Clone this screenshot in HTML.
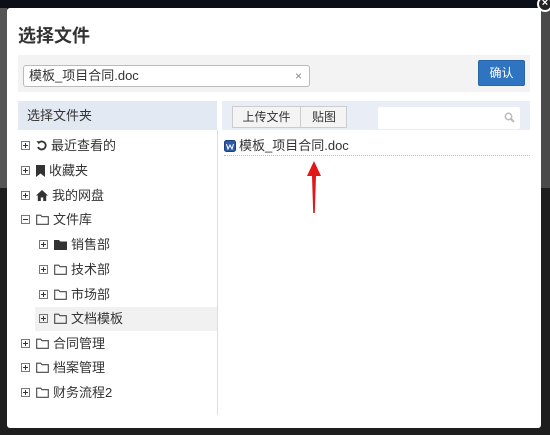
<!DOCTYPE html>
<html><head><meta charset="utf-8"><style>
*{margin:0;padding:0;box-sizing:border-box}
body{width:550px;height:435px;background:#1e1e1e;position:relative;overflow:hidden;font-family:"Liberation Sans","Noto Sans CJK SC",sans-serif;color:#333}
.abs{position:absolute}
.dlg{left:7px;top:8px;width:534px;height:420px;background:#fff;border-radius:3px}
.row{position:absolute;height:24px;line-height:24px;font-size:13px;color:#333;white-space:nowrap}
.pm{display:inline-block;width:9px;height:9px;border:1px solid #777;position:relative;vertical-align:middle;margin-right:6px;top:-1px}
.pm:before{content:"";position:absolute;left:1px;top:3px;width:5px;height:1px;background:#333}
.pm.p:after{content:"";position:absolute;left:3px;top:1px;width:1px;height:5px;background:#333}
.ic{display:inline-block;vertical-align:middle;margin-right:4px;position:relative;top:-1px}
</style></head><body>
<div class="abs" style="left:0;top:0;width:550px;height:8px;background:#0b1018"></div>
<div class="abs" style="left:0;top:8px;width:7px;height:180px;background:#555"></div>
<div class="abs" style="left:541px;top:8px;width:9px;height:180px;background:#4a4a4a"></div>
<div class="abs dlg"></div>
<div class="abs" style="left:537px;top:-4px;width:16px;height:16px;border-radius:50%;background:#222;border:2px solid #fff;color:#fff;font-size:11px;font-weight:bold;line-height:11px;text-align:center">×</div>
<div class="abs" style="left:18px;top:22px;font-size:18px;font-weight:bold;color:#333">选择文件</div>
<div class="abs" style="left:18px;top:55px;width:512px;height:37px;background:#f3f3f3"></div>
<div class="abs" style="left:23px;top:65px;width:287px;height:22px;background:#fff;border:1px solid #bbb;border-radius:3px;font-size:13px;line-height:20px;padding-left:5px">模板_项目合同.doc<span style="position:absolute;right:7px;color:#888;font-size:12px">×</span></div>
<div class="abs" style="left:478px;top:60px;width:47px;height:26px;background:#2f74c0;border:1px solid #2a64a8;border-radius:2px;color:#fff;font-size:12px;line-height:24px;text-align:center">确认</div>
<div class="abs" style="left:18px;top:101px;width:199px;height:29px;background:#e3e9f3;font-size:13px;line-height:29px;padding-left:9px">选择文件夹</div>
<div class="abs" style="left:222px;top:101px;width:308px;height:29px;background:#e9eef6"></div>
<div class="abs" style="left:232px;top:106px;width:115px;height:22px;background:#f4f4f4;border:1px solid #ccc;font-size:12px;line-height:20px"><span style="position:absolute;left:0;width:68px;text-align:center;border-right:1px solid #ccc">上传文件</span><span style="position:absolute;left:68px;width:46px;text-align:center">贴图</span></div>
<div class="abs" style="left:378px;top:107px;width:142px;height:22px;background:#fff;border-radius:2px"><svg style="position:absolute;right:5px;top:5px" width="11" height="11" viewBox="0 0 11 11"><circle cx="4.5" cy="4.5" r="3.2" fill="none" stroke="#bbb" stroke-width="1.5"/><path d="M7 7l3 3" stroke="#bbb" stroke-width="2"/></svg></div>
<div class="abs" style="left:217px;top:130px;width:1px;height:285px;background:#ddd"></div>
<div class="abs" style="left:35px;top:307px;width:182px;height:24px;background:#f1f1f1"></div>

<div class="row" style="left:21px;top:134px"><span class="pm p"></span><svg class="ic" width="11" height="11" viewBox="0 0 11 11"><path d="M3 2.5A4 4 0 1 1 2 7" fill="none" stroke="#333" stroke-width="1.8"/><path d="M0.5 1l3.5 0.5-1 3z" fill="#333"/></svg>最近查看的</div>
<div class="row" style="left:21px;top:159px"><span class="pm p"></span><svg class="ic" width="9" height="12" viewBox="0 0 9 12"><path d="M0 0h9v12l-4.5-3.5L0 12z" fill="#333"/></svg>收藏夹</div>
<div class="row" style="left:21px;top:184px"><span class="pm p"></span><svg class="ic" width="12" height="11" viewBox="0 0 12 11"><path d="M6 0L0 5.5h1.8V11h3V7.5h2.4V11h3V5.5H12z" fill="#333"/></svg>我的网盘</div>
<div class="row" style="left:21px;top:208px"><span class="pm"></span><svg class="ic" width="13" height="11" viewBox="0 0 13 11"><path d="M0.7 1.2h4l1.3 1.5h6.3v7.6H0.7z" fill="none" stroke="#444" stroke-width="1.1"/></svg>文件库</div>
<div class="row" style="left:39px;top:233px"><span class="pm p"></span><svg class="ic" width="13" height="11" viewBox="0 0 13 11"><path d="M0 1h5l1.3 1.5H13V11H0z" fill="#333"/></svg>销售部</div>
<div class="row" style="left:39px;top:258px"><span class="pm p"></span><svg class="ic" width="13" height="11" viewBox="0 0 13 11"><path d="M0.7 1.2h4l1.3 1.5h6.3v7.6H0.7z" fill="none" stroke="#444" stroke-width="1.1"/></svg>技术部</div>
<div class="row" style="left:39px;top:283px"><span class="pm p"></span><svg class="ic" width="13" height="11" viewBox="0 0 13 11"><path d="M0.7 1.2h4l1.3 1.5h6.3v7.6H0.7z" fill="none" stroke="#444" stroke-width="1.1"/></svg>市场部</div>
<div class="row" style="left:39px;top:307px"><span class="pm p"></span><svg class="ic" width="13" height="11" viewBox="0 0 13 11"><path d="M0.7 1.2h4l1.3 1.5h6.3v7.6H0.7z" fill="none" stroke="#444" stroke-width="1.1"/></svg>文档模板</div>
<div class="row" style="left:21px;top:332px"><span class="pm p"></span><svg class="ic" width="13" height="11" viewBox="0 0 13 11"><path d="M0.7 1.2h4l1.3 1.5h6.3v7.6H0.7z" fill="none" stroke="#444" stroke-width="1.1"/></svg>合同管理</div>
<div class="row" style="left:21px;top:356px"><span class="pm p"></span><svg class="ic" width="13" height="11" viewBox="0 0 13 11"><path d="M0.7 1.2h4l1.3 1.5h6.3v7.6H0.7z" fill="none" stroke="#444" stroke-width="1.1"/></svg>档案管理</div>
<div class="row" style="left:21px;top:381px"><span class="pm p"></span><svg class="ic" width="13" height="11" viewBox="0 0 13 11"><path d="M0.7 1.2h4l1.3 1.5h6.3v7.6H0.7z" fill="none" stroke="#444" stroke-width="1.1"/></svg>财务流程2</div>

<div class="row" style="left:224px;top:134px"><svg class="ic" style="margin-right:3px" width="12" height="12" viewBox="0 0 12 12"><rect x="0.5" y="0.5" width="11" height="11" rx="2" fill="#2c5aa8" stroke="#1c3f80"/><path d="M2.5 4l1.5 5 2-4 2 4 1.5-5" fill="none" stroke="#fff" stroke-width="1"/></svg>模板_项目合同.doc</div>
<div class="abs" style="left:224px;top:155px;width:306px;border-top:1px dotted #bbb"></div>
<svg class="abs" style="left:305px;top:160px" width="18" height="54" viewBox="0 0 18 54"><path d="M9 1L2 16h5l1.2 37h1.6L11 16h5z" fill="#e01818"/></svg>
</body></html>
